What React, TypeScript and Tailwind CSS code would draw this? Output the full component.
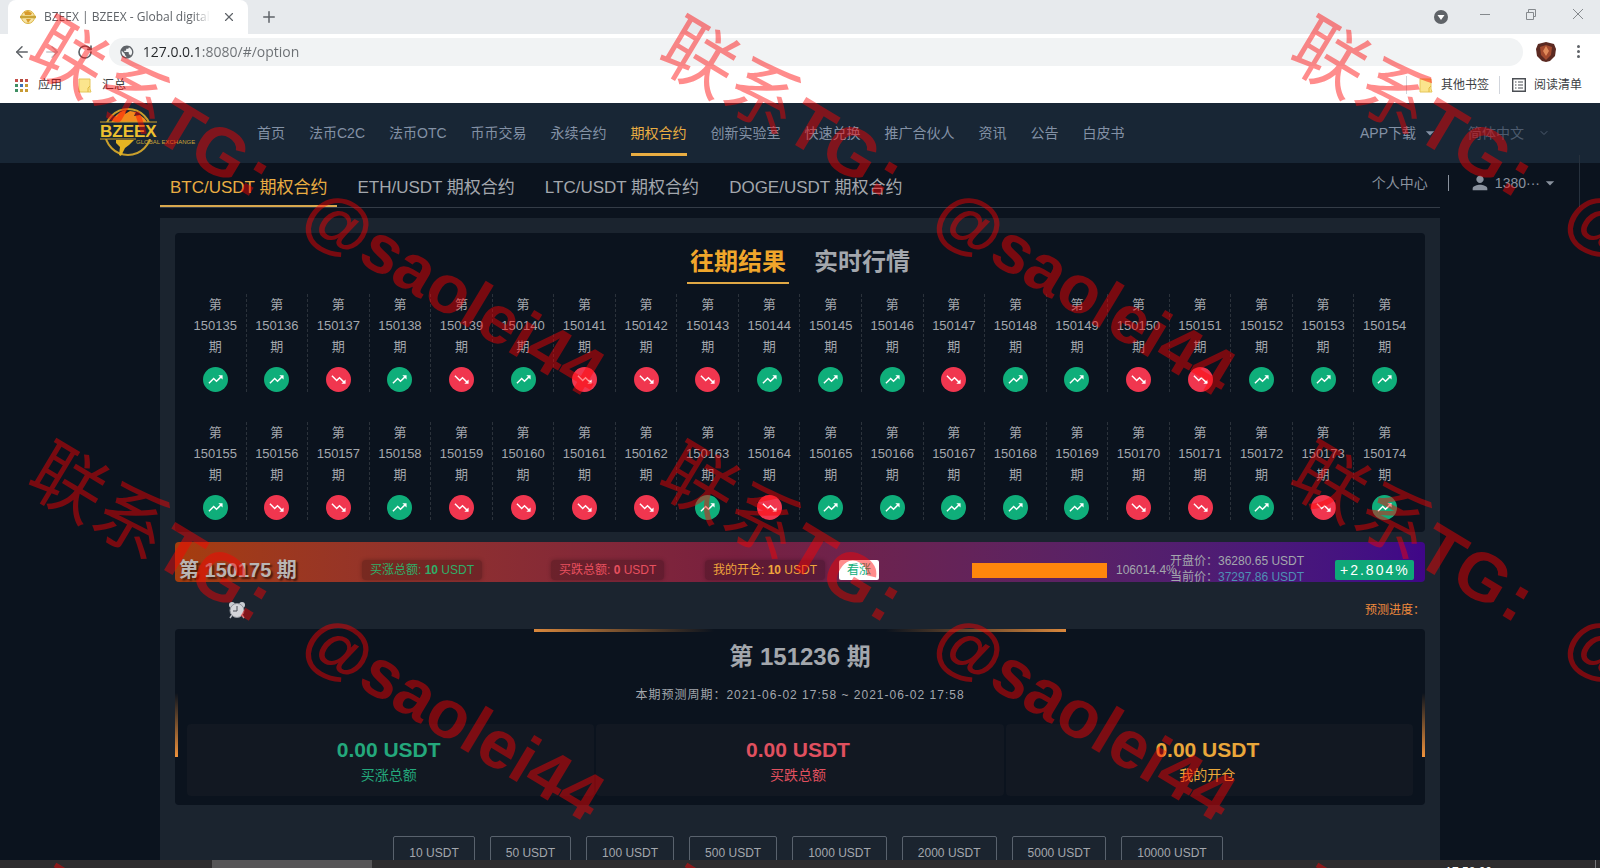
import type { ReactNode } from "react";
import { ArrowLeft, ArrowRight, ChevronDown, Plus, RotateCw, X } from "lucide-react";
import { MdArrowDropDown, MdPerson, MdPublic, MdTrendingDown, MdTrendingUp } from "react-icons/md";

const NAV = ["首页", "法币C2C", "法币OTC", "币币交易", "永续合约", "期权合约", "创新实验室", "快速兑换", "推广合伙人", "资讯", "公告", "白皮书"];
const PAIRS = ["BTC", "ETH", "LTC", "DOGE"];
const AMOUNTS = [10, 50, 100, 500, 1000, 2000, 5000, 10000];

/* u = up, d = down, one letter per finished period */
const RESULTS = ["uudududdduuuduudduuu", "uddudddduduuuuuddudu"];
const FIRST_PERIOD = 150135;

const APP_DOTS = [
  "#c5504b", "#b04a3c", "#c5504b",
  "#3f8f63", "#3d72b8", "#c79a34",
  "#3f8f63", "#c79a34", "#c79a34",
];

function Folder() {
  return (
    <svg width="14" height="15" viewBox="0 0 14 15" aria-hidden>
      <path d="M1 1h11v10l1 3H1z" fill="#fbe58d" stroke="#e6c65a" />
      <path d="M10 14V10l2-2" fill="none" stroke="#e0b93f" />
    </svg>
  );
}

function Logo() {
  return (
    <svg width="98" height="52" viewBox="0 0 98 52" role="img" aria-label="BZEEX">
      <circle cx="29" cy="25" r="23" fill="none" stroke="#c99f2c" strokeWidth="2" />
      <path d="M13 14c3-6 9-10 14-11l-1 4 5-3 6 1-2 4 6-1 5 4 3 5H11z" fill="#f28a1c" />
      <path d="M17 33h18l-5 5-4 3-4 8-2-1 1-8-4-4z" fill="#e6b422" />
      <rect x="1" y="15" width="58" height="17" fill="#182635" />
      <path d="M1 15h57M1 32h36" stroke="#c99f2c" />
      <text x="1" y="30" fill="#edc02f" fontFamily="Liberation Sans, Arial, sans-serif" fontWeight="700" fontSize="17">
        BZEEX
      </text>
      <text x="37" y="37" fill="#c9a437" fontFamily="Liberation Sans, Arial, sans-serif" fontSize="6">
        GLOBAL EXCHANGE
      </text>
    </svg>
  );
}

function AlarmClock() {
  return (
    <svg width="18" height="18" viewBox="0 0 18 18" role="img" aria-label="倒计时">
      <circle cx="4" cy="4" r="3" fill="#c9ccd1" />
      <circle cx="14" cy="4" r="3" fill="#c9ccd1" />
      <path d="M4 14l-2 3M14 14l2 3" stroke="#b9bcc2" strokeWidth="1.5" />
      <circle cx="9" cy="9.5" r="7" fill="#d4d5da" stroke="#8d9199" />
      <path d="M9 5v5H5" fill="none" stroke="#4b4f57" />
    </svg>
  );
}

function BrowserChrome() {
  return (
    <header className="shrink-0 bg-white font-['Open_Sans','Noto_Sans_CJK_SC',sans-serif] text-[#5f6368]">
      <div className="flex h-[34px] items-start bg-[#e7eaed] pl-2">
        <div className="flex h-full w-60 items-center rounded-t-lg bg-white px-3">
          <svg width="16" height="16" viewBox="0 0 16 16" className="shrink-0" aria-hidden>
            <circle cx="8" cy="8" r="6.5" fill="#f6e3a4" stroke="#d9b23c" />
            <path d="M4 3l4-1 4 2-1 2H5zM6 10h5l-3 4z" fill="#d89b2a" />
            <path d="M0 8h16" stroke="#c9a437" strokeWidth="2.5" />
          </svg>
          <span className="ml-2 w-[172px] overflow-hidden mask-r-from-90% text-[12px] whitespace-nowrap">
            BZEEX | BZEEX - Global digital
          </span>
          <button type="button" aria-label="关闭标签页" className="ml-3">
            <X size={14} strokeWidth={2} />
          </button>
        </div>
        <button type="button" aria-label="新标签页" className="mt-2 ml-3">
          <Plus size={18} strokeWidth={2} />
        </button>
        <div className="mt-[7px] ml-auto flex items-start pr-4">
          <svg width="14" height="14" viewBox="0 0 14 14" className="mt-[3px] mr-8" aria-hidden>
            <circle cx="7" cy="7" r="7" fill="#5f6368" />
            <path d="M3.500 5h7L7 10z" fill="#fff" />
          </svg>
          <svg width="104" height="14" viewBox="0 0 104 14" fill="none" stroke="#85898d" aria-hidden>
            <path d="M0 7.500h10M46.500 5.500h7v7h-7zM48.500 5.500v-3h7v7h-2M93 2l10 10M103 2L93 12" />
          </svg>
        </div>
      </div>

      <div className="flex h-[35px] items-center pr-5 pl-[13px]">
        <button type="button" aria-label="后退">
          <ArrowLeft size={18} />
        </button>
        <button type="button" aria-label="前进" className="ml-3 text-[#c4c7ca]">
          <ArrowRight size={18} />
        </button>
        <button type="button" aria-label="刷新" className="ml-4">
          <RotateCw size={16} strokeWidth={2.5} />
        </button>
        <div className="ml-4 flex h-7 flex-1 items-center rounded-full bg-[#f1f3f4] pl-2.5">
          <MdPublic size={16} />
          <input
            aria-label="地址"
            defaultValue="127.0.0.1:8080/#/option"
            className="ml-2 w-full bg-linear-to-r from-[#24272a] from-[58px] to-[#6b6f73] to-[59px] bg-clip-text text-[14px] text-transparent outline-none"
          />
        </div>
        <svg width="22" height="22" viewBox="0 0 22 22" className="ml-3" role="img" aria-label="用户">
          <path d="M3 3l8-2 8 2 2 5-1 7-5 5-4 1-4-1-5-5-1-7z" fill="#5b2a22" />
          <path d="M5 6l6-2 6 2-1 8-5 5-5-5z" fill="#a34a2e" />
          <path d="M11 5l3 5-3 5-3-5z" fill="#e08a5a" />
        </svg>
        <button type="button" aria-label="菜单" className="ml-5 flex flex-col gap-0.5">
          <i className="size-[3px] rounded-full bg-[#5f6368]" />
          <i className="size-[3px] rounded-full bg-[#5f6368]" />
          <i className="size-[3px] rounded-full bg-[#5f6368]" />
        </button>
      </div>

      <div className="flex h-[34px] items-start pt-[7px] pr-[18px] pl-[15px] text-[12px] text-[#3c4043]">
        <a href="#apps" className="flex items-center gap-2.5">
          <span className="grid grid-cols-3 gap-0.5">
            {APP_DOTS.map((c, i) => (
              <i key={i} className="size-[3px]" style={{ background: c }} />
            ))}
          </span>
          应用
        </a>
        <a href="#folder" className="ml-4 flex items-center gap-2.5">
          <Folder />
          汇总
        </a>
        <a href="#others" className="ml-auto flex items-center gap-2 border-l border-gray-300 pl-3">
          <Folder />
          其他书签
        </a>
        <a href="#reading" className="ml-2.5 flex items-center gap-2 border-l border-gray-300 pl-3">
          <svg width="14" height="14" viewBox="0 0 14 14" fill="none" stroke="#4b4f54" aria-hidden>
            <path d="M.7.7h12.600v12.600H.7z" strokeWidth="1.400" />
            <path d="M3 4h1.500M6 4h5M3 7h1.500M6 7h5M3 10h1.500M6 10h5" strokeWidth="1.200" />
          </svg>
          阅读清单
        </a>
      </div>
    </header>
  );
}

function SiteNav() {
  return (
    <nav className="flex h-[60px] items-center bg-[#182635] pr-[50px] pl-[99px] text-[14px] whitespace-nowrap text-[#8391a5]">
      <a href="#/">
        <Logo />
      </a>
      <div className="ml-[60px] flex gap-6">
        {NAV.map((item) => (
          <a
            key={item}
            href="#/option"
            className={
              item === "期权合约"
                ? "border-b-3 border-[#e9ad42] pt-[13px] pb-[9px] text-[#e9ad42]"
                : "border-b-3 border-transparent pt-[13px] pb-[9px]"
            }
          >
            {item}
          </a>
        ))}
      </div>
      <button type="button" className="ml-auto flex items-center gap-1">
        APP下载 <MdArrowDropDown size={20} />
      </button>
      <label className="relative ml-7 flex items-center text-[#4d5b6e]">
        <span className="sr-only">语言</span>
        <select className="w-[82px] appearance-none bg-transparent outline-none">
          <option>简体中文</option>
        </select>
        <ChevronDown size={12} className="pointer-events-none absolute right-0" />
      </label>
    </nav>
  );
}

function Period({ id, up }: { id: number; up: boolean }) {
  return (
    <li className="flex flex-1 flex-col items-center border-l border-dashed border-[#2b323b] text-[13px] leading-[21px] first:border-l-0">
      <span>第</span>
      <span>{id}</span>
      <span>期</span>
      <span
        className={
          up
            ? "mt-2.5 flex size-[25px] items-center justify-center rounded-full bg-[#0fae7a] text-white"
            : "mt-2.5 flex size-[25px] items-center justify-center rounded-full bg-[#f0364f] text-white"
        }
      >
        {up ? <MdTrendingUp size={17} aria-label="涨" /> : <MdTrendingDown size={17} aria-label="跌" />}
      </span>
    </li>
  );
}

function Pill({ className, children }: { className: string; children: ReactNode }) {
  return (
    <div>
      <span className={`inline-block rounded-sm bg-black/20 px-2 leading-5 shadow-[0_0_4px_rgba(0,0,0,0.25)] ${className}`}>
        {children}
      </span>
    </div>
  );
}

function Total({ label, className }: { label: string; className: string }) {
  return (
    <div className={`rounded bg-[#121822] pt-3 pr-1 pb-2.5 text-center ${className}`}>
      <div className="text-[21px] leading-7 font-bold">0.00 USDT</div>
      <div className="text-[14px] leading-[22px]">{label}</div>
    </div>
  );
}

function Stamp({ x, y }: { x: number; y: number }) {
  return (
    <div
      className="absolute flex origin-left rotate-31 items-center text-[68px] leading-[72px] font-bold whitespace-nowrap text-[#ff0000]/45"
      style={{ left: x, top: y }}
    >
      <span className="text-[74px] font-normal">联系</span>
      <span>TG</span>
      <span className="ml-1">:</span>
      <span className="ml-13">@saolei44</span>
    </div>
  );
}

export default function App() {
  return (
    <div className="relative flex h-screen flex-col overflow-hidden bg-[#0b131e] font-['Liberation_Sans','Noto_Sans_CJK_SC',sans-serif] text-[#a3a7ad]">
      <BrowserChrome />

      <main className="min-h-0 flex-1 overflow-hidden">
        <SiteNav />

        <div className="relative">
          <div className="absolute top-[9px] right-10 flex items-center text-[14px] text-[#8a929e]">
            <a href="#/uc">个人中心</a>
            <i className="ml-5 h-4 w-px bg-[#8a929e]" />
            <button type="button" className="ml-5 flex items-center">
              <MdPerson size={22} className="mr-1" />
              1380···
              <MdArrowDropDown size={20} />
            </button>
          </div>
          <i className="absolute -top-2 right-5 h-13 w-px bg-[#27313d]" />

          <div className="mx-auto w-4/5">
            <div className="flex gap-2.5 border-b border-[#343c47] text-[17px] leading-6 whitespace-nowrap">
              {PAIRS.map((p, i) => (
                <a
                  key={p}
                  href={`#/option/${p}`}
                  className={
                    i === 0
                      ? "border-b-2 border-[#d9a84e] px-2.5 pt-[13px] pb-[5px] text-[#e9ad42]"
                      : "px-2.5 pt-[13px]"
                  }
                >
                  {p}/USDT 期权合约
                </a>
              ))}
            </div>

            <div className="mt-2.5 bg-[#1b242f] p-[15px]">
              <section className="rounded bg-[#0b131e] px-2.5 pt-[13px] pb-3">
                <div className="flex justify-center gap-[22px] text-[24px] leading-8 font-bold">
                  <button type="button" className="border-b-2 border-[#e0a845] px-[3px] pb-1 text-[#f0a62b]">
                    往期结果
                  </button>
                  <button type="button" className="border-b-2 border-transparent px-[3px] pb-1">
                    实时行情
                  </button>
                </div>
                <div className="mt-2.5 flex flex-col gap-[30px]">
                  {RESULTS.map((row, r) => (
                    <ul key={r} className="flex">
                      {[...row].map((c, i) => (
                        <Period key={i} id={FIRST_PERIOD + r * 20 + i} up={c === "u"} />
                      ))}
                    </ul>
                  ))}
                </div>
              </section>

              <section className="mt-2.5 grid h-10 grid-cols-[187fr_189fr_154fr_134fr_133fr_198fr_165fr_90fr] items-start overflow-hidden rounded-sm bg-linear-to-r from-[#a53d0c] via-[#78203f] via-45% to-[#3f0688] pt-[18px] text-[12px] leading-5 whitespace-nowrap">
                <h2 className="pl-1 text-[20px] font-bold text-[#b9b5b3] [text-shadow:2px_2px_2px_rgba(0,0,0,0.6)]">
                  第 150175 期
                </h2>
                <Pill className="text-[#2fae68]">
                  买涨总额: <b>10</b> USDT
                </Pill>
                <Pill className="text-[#e8505f]">
                  买跌总额: <b>0</b> USDT
                </Pill>
                <Pill className="text-[#f0a63c]">
                  我的开仓: <b>10</b> USDT
                </Pill>
                <div>
                  <span className="inline-block rounded-xs bg-white px-2 text-[#0fae7a]">看涨</span>
                </div>
                <div className="flex min-w-0 items-center">
                  <span className="h-[15px] w-[135px] shrink-0 bg-[#ff860c]" />
                  <span className="ml-[9px]">106014.4%</span>
                </div>
                <div className="-mt-[7px] leading-4">
                  <div>开盘价：36280.65 USDT</div>
                  <div>
                    当前价：<span className="text-[#4f8fb4]">37297.86 USDT</span>
                  </div>
                </div>
                <div>
                  <span className="inline-block rounded-xs bg-[#0fa878] pr-1 pl-[5px] text-[14px] tracking-[2px] text-white">
                    +2.804%
                  </span>
                </div>
              </section>

              <div className="flex h-[47px] items-center justify-between pt-2 pl-[53px] text-[12px] text-[#f08a3c]">
                <AlarmClock />
                <span>预测进度：</span>
              </div>

              <section className="relative rounded bg-[#0b131e] px-3 pt-3 pb-[9px]">
                <i className="absolute top-0 left-[359px] h-[3px] w-[180px] bg-linear-to-r from-[#d9873c] to-transparent" />
                <i className="absolute top-0 right-[359px] h-[3px] w-[180px] bg-linear-to-l from-[#d9873c] to-transparent" />
                <i className="absolute bottom-12 left-0 h-16 w-[3px] bg-linear-to-t from-[#ef923c] to-transparent" />
                <i className="absolute right-0 bottom-12 h-16 w-[3px] bg-linear-to-t from-[#ef923c] to-transparent" />
                <h2 className="text-center text-[24px] leading-8 font-bold">第 151236 期</h2>
                <p className="mt-3 text-center text-[12px] leading-5 tracking-[1px]">
                  本期预测周期：2021-06-02 17:58 ~ 2021-06-02 17:58
                </p>
                <div className="mt-[19px] grid grid-cols-3 gap-0.5">
                  <Total label="买涨总额" className="text-[#24a87c]" />
                  <Total label="买跌总额" className="text-[#e0505f]" />
                  <Total label="我的开仓" className="text-[#eaa73a]" />
                </div>
              </section>

              <div className="mt-[31px] flex justify-center gap-[15px] pl-4">
                {AMOUNTS.map((n) => (
                  <button key={n} type="button" className="rounded-xs border border-[#59626d] px-[15px] text-[12px] leading-8">
                    {n} USDT
                  </button>
                ))}
              </div>
            </div>
          </div>
        </div>
      </main>

      <footer className="flex h-2 shrink-0 items-start overflow-hidden bg-[#2d2c2e]">
        <i className="ml-[13.25%] h-full w-40 bg-[#565557]" />
        <time className="mt-1 mr-[103px] ml-auto text-[12px] leading-4 text-white">17:58:00</time>
        <i className="mr-1 h-full w-px bg-[#77777a]" />
      </footer>

      <div className="pointer-events-none absolute inset-0 overflow-hidden">
        {[4, 429, 854].map((y) => [36, 667, 1298].map((x) => <Stamp key={`${x}-${y}`} x={x} y={y} />))}
      </div>
    </div>
  );
}
